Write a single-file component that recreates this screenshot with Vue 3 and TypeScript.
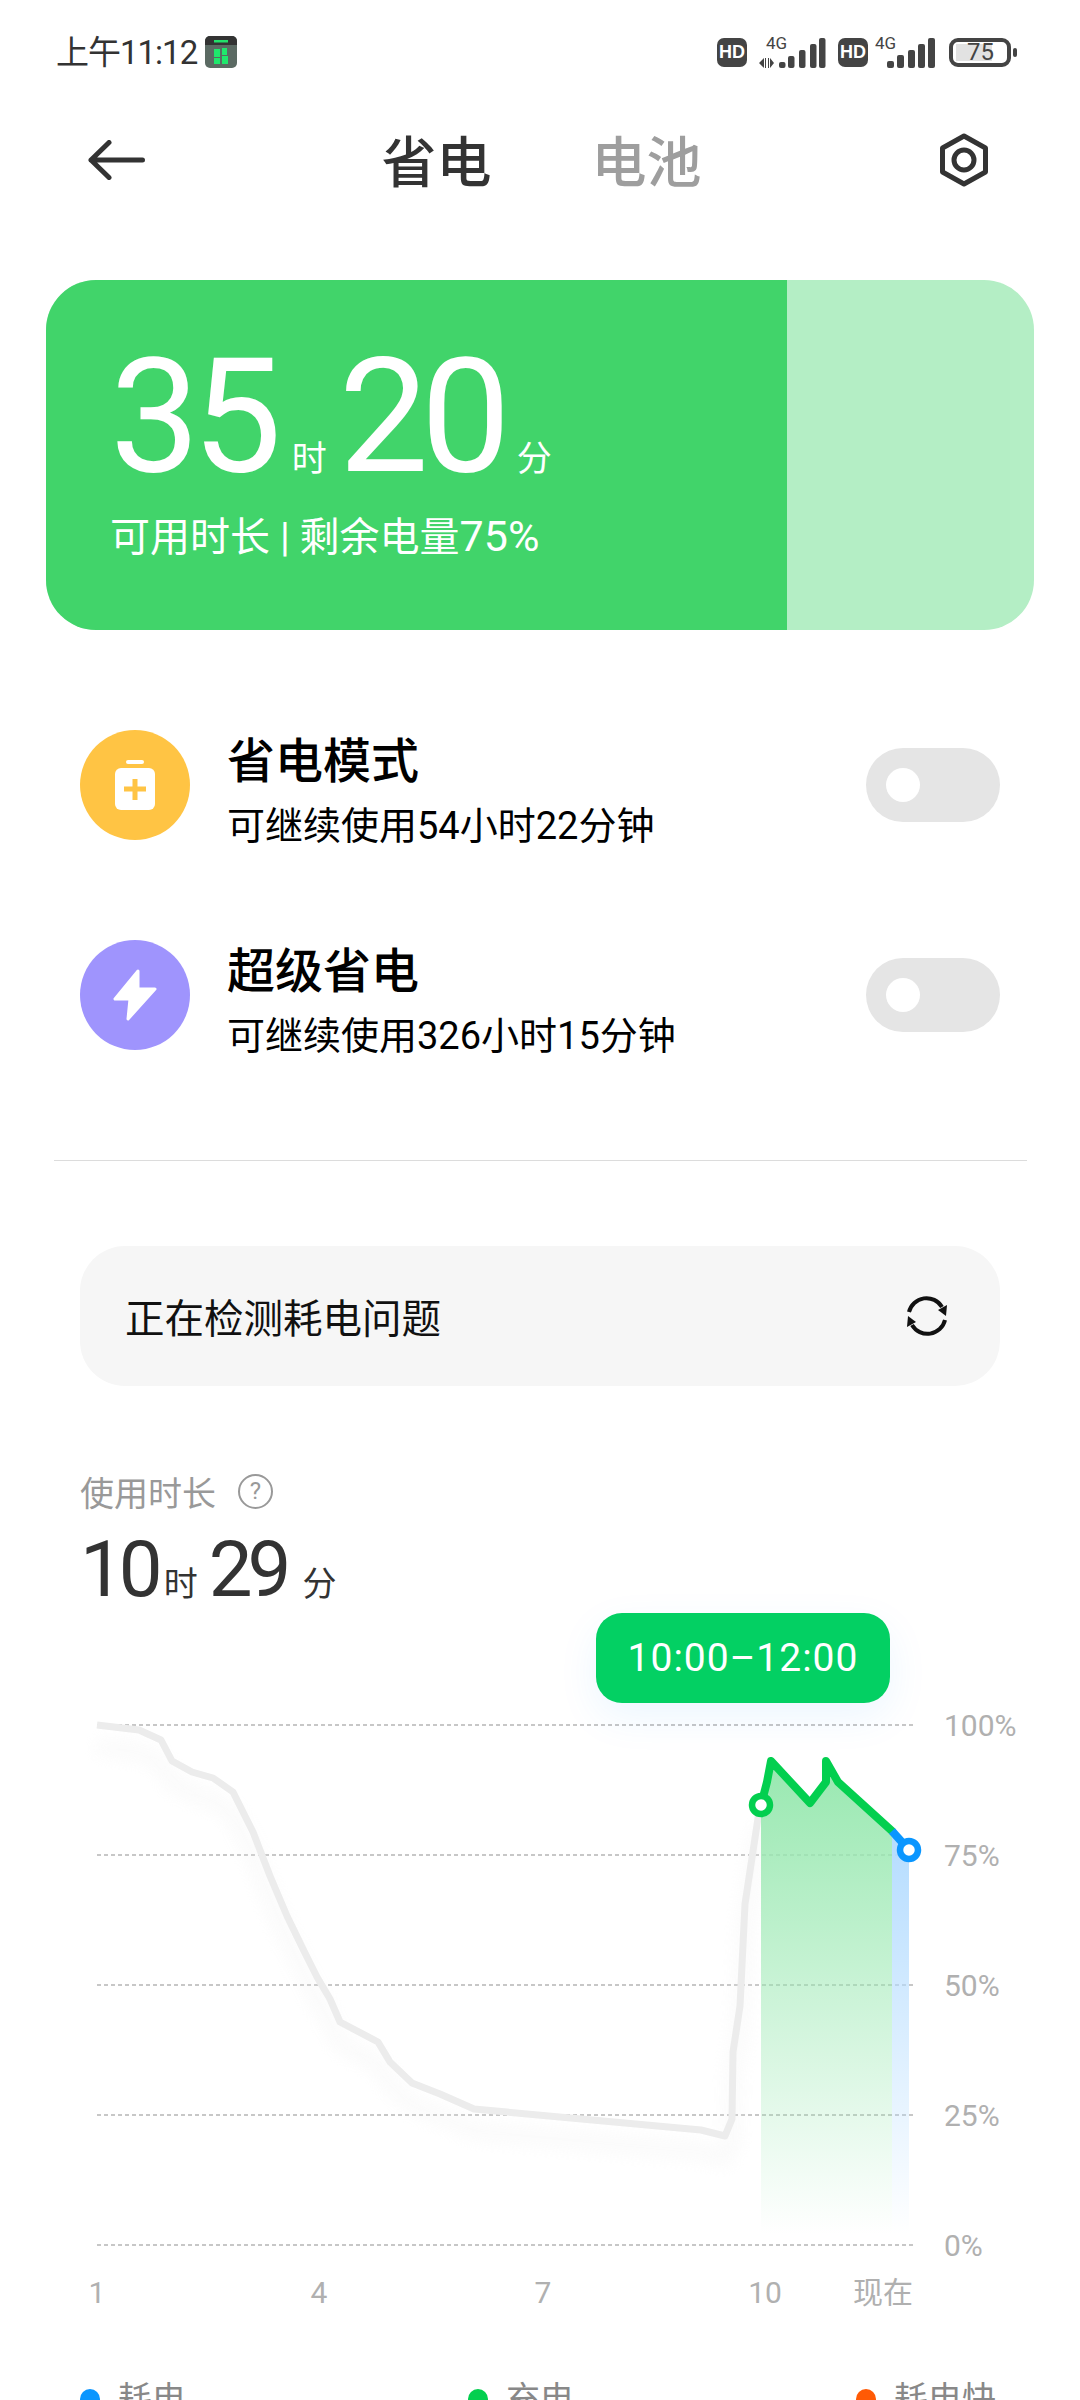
<template>
  <div class="page">
    <div class="status-bar">
      <div class="status-left">
        <span class="clock">上午11:12</span>
        <svg class="app-icon" width="32" height="32" viewBox="0 0 32 32">
          <rect width="32" height="32" rx="5" fill="#5b6a63" />
          <path d="M0 9V5a5 5 0 0 1 5-5h22a5 5 0 0 1 5 5v4z" fill="#333" />
          <rect x="9" y="4" width="14" height="2.5" fill="#22e06a" />
          <rect x="9" y="13" width="6" height="8" fill="#1fe86c" />
          <rect x="9" y="22" width="6" height="6" fill="#1fe86c" />
          <rect x="17" y="12" width="5" height="7" fill="#1fe86c" />
          <rect x="17" y="20" width="6" height="8" fill="#1fe86c" />
        </svg>
      </div>
      <div class="status-right">
        <span class="hd">HD</span>
        <svg class="signal first" width="67" height="36" viewBox="0 -6 67 36">
          <text x="7" y="11" class="net">4G</text>
          <path d="M5 20v10l-5-5zM7 20v10h-1v-10zM10 20v10h-1v-10zM11 20l4 5-4 5z" fill="#444" />
          <rect v-for="b in firstBars" :key="b.x" :x="b.x" :y="30 - b.h" width="6.500" :height="b.h" rx="2" fill="#444" />
        </svg>
        <span class="hd second">HD</span>
        <svg class="signal" width="60" height="36" viewBox="0 -6 60 36">
          <text x="0" y="11" class="net">4G</text>
          <rect v-for="b in secondBars" :key="b.x" :x="b.x" :y="30 - b.h" width="7" :height="b.h" rx="2" fill="#444" />
        </svg>
        <div class="battery">
          <div class="battery-body">
            <div class="battery-fill"></div>
            <span class="battery-num">75</span>
          </div>
          <div class="battery-nub"></div>
        </div>
      </div>
    </div>

    <div class="nav">
      <svg width="57" height="40" viewBox="0 0 57 40" fill="none" stroke="#333" stroke-width="5" stroke-linecap="round" stroke-linejoin="round">
        <path d="M21 2.5 3 20l18 17.5M3 20h51.5" />
      </svg>
      <div class="tabs">
        <span class="tab active">省电</span>
        <span class="tab">电池</span>
      </div>
      <svg width="52" height="54" viewBox="0 0 52 54" fill="none" stroke="#333" stroke-width="5" stroke-linejoin="round">
        <path d="M26 3 47.500 15v24L26 51 4.500 39V15z" />
        <circle cx="26" cy="27" r="10" />
      </svg>
    </div>

    <div class="battery-card">
      <div class="battery-level">
        <div class="hero">
          <span class="hero-num">35</span><span class="hero-unit">时</span>
          <span class="hero-num">20</span><span class="hero-unit">分</span>
        </div>
        <div class="hero-sub">可用时长 | 剩余电量<span class="hero-pct">75%</span></div>
      </div>
    </div>

    <div class="modes">
      <div v-for="m in modes" :key="m.title" class="mode">
        <div class="mode-icon" :class="m.kind">
          <svg v-if="m.kind === 'saver'" width="40" height="50" viewBox="0 0 40 50">
            <rect x="11" y="0" width="18" height="4" rx="2" fill="#fff" />
            <rect x="0" y="8" width="40" height="42" rx="6" fill="#fff" />
            <path d="M9 29h22M20 19v21" stroke="#ffc444" stroke-width="5" fill="none" />
          </svg>
          <svg v-else width="44" height="52" viewBox="0 0 44 52">
            <path d="M25 2 2 30h15l-2 20 27-30H25z" fill="#fff" stroke="#fff" stroke-width="3" stroke-linejoin="round" />
          </svg>
        </div>
        <div class="mode-text">
          <div class="mode-title">{{ m.title }}</div>
          <div class="mode-sub">{{ m.sub }}</div>
        </div>
        <div class="toggle"><div class="knob"></div></div>
      </div>
    </div>

    <div class="divider"></div>

    <div class="detect">
      <span>正在检测耗电问题</span>
      <svg width="42" height="40" viewBox="0 0 42 40" fill="none">
        <path d="M3 16A18 18 0 0 1 36 11" stroke="#111" stroke-width="4" />
        <path d="M39 24A18 18 0 0 1 6 29" stroke="#111" stroke-width="4" />
        <path d="M41 9 40 20 32 14z" fill="#111" />
        <path d="M1 31 2 20 10 26z" fill="#111" />
      </svg>
    </div>

    <div class="usage">
      <div class="usage-label">
        <span>使用时长</span>
        <span class="help">?</span>
      </div>
      <div class="usage-time">
        <span class="usage-num">10</span><span class="usage-unit">时</span>
        <span class="usage-num">29</span><span class="usage-unit">分</span>
      </div>
    </div>

    <div class="chart">
      <svg class="chart-svg" width="1080" height="770" viewBox="0 1600 1080 770">
        <defs>
          <linearGradient id="greenFill" x1="0" y1="0" x2="0" y2="1">
            <stop offset="0" stop-color="#98e8b0" />
            <stop offset="1" stop-color="#98e8b0" stop-opacity="0" />
          </linearGradient>
          <linearGradient id="blueFill" x1="0" y1="0" x2="0" y2="1">
            <stop offset="0" stop-color="#b4dcff" />
            <stop offset="1" stop-color="#b4dcff" stop-opacity="0" />
          </linearGradient>
          <filter id="soft" x="-20%" y="-20%" width="140%" height="140%">
            <feGaussianBlur stdDeviation="9" />
          </filter>
        </defs>

        <g v-for="g in gridLines" :key="g.label">
          <line x1="97" x2="913" :y1="g.y" :y2="g.y" class="grid" />
          <text x="944" :y="g.y + 11" class="axis">{{ g.label }}</text>
        </g>
        <text v-for="t in xLabels" :key="t.label" :x="t.x" y="2304" text-anchor="middle" class="axis">{{ t.label }}</text>

        <polyline :points="usedLine" class="used-shadow" filter="url(#soft)" transform="translate(0 22)" />
        <polyline :points="usedLine" class="used" />

        <polygon :points="greenArea" fill="url(#greenFill)" />
        <polygon points="892,1832 909,1851 909,2235 892,2235" fill="url(#blueFill)" />
        <polyline :points="greenPoints" class="line-green" />
        <line x1="892" y1="1832" x2="909" y2="1851" class="line-blue" />
        <circle cx="761" cy="1806" r="9" fill="#fff" stroke="#03cf4f" stroke-width="6.500" />
        <circle cx="909" cy="1851" r="9" fill="#fff" stroke="#0a96ff" stroke-width="6.500" />
      </svg>
      <div class="tip">10:00–12:00</div>
    </div>

    <div class="legend">
      <div v-for="l in legend" :key="l.label" class="legend-item">
        <span class="dot" :style="{ background: l.color }"></span>
        <span>{{ l.label }}</span>
      </div>
    </div>
  </div>
</template>

<script setup lang="ts">
const firstBars = [
  { x: 20, h: 6 },
  { x: 29, h: 12 },
  { x: 40, h: 18 },
  { x: 51, h: 24 },
  { x: 60, h: 30 },
]
const secondBars = [
  { x: 12, h: 7 },
  { x: 22, h: 13 },
  { x: 33, h: 18 },
  { x: 43, h: 24 },
  { x: 53, h: 30 },
]

const modes = [
  { kind: 'saver', title: '省电模式', sub: '可继续使用54小时22分钟' },
  { kind: 'super', title: '超级省电', sub: '可继续使用326小时15分钟' },
]

const gridLines = [
  { y: 1726, label: '100%' },
  { y: 1856, label: '75%' },
  { y: 1986, label: '50%' },
  { y: 2116, label: '25%' },
  { y: 2246, label: '0%' },
]

const xLabels = [
  { x: 97, label: '1' },
  { x: 319, label: '4' },
  { x: 543, label: '7' },
  { x: 765, label: '10' },
  { x: 883, label: '现在' },
]

const usedLine =
  '97,1726 139,1731 161,1741 172,1762 192,1773 213,1779 233,1793 253,1833 270,1877 287,1917 303,1950 317,1978 330,2000 340,2023 378,2043 390,2063 412,2084 440,2095 474,2110 701,2131 725,2137 732,2120 733,2053 740,2007 745,1905 760,1806'

const greenPoints = '761,1806 767,1783 771,1762 810,1804 826,1783 826,1762 838,1783 892,1832'
const greenArea = `${greenPoints} 892,2235 761,2235`

const legend = [
  { label: '耗电', color: '#0a96ff' },
  { label: '充电', color: '#03cf4f' },
  { label: '耗电快', color: '#ff5a05' },
]
</script>

<style scoped>
.page {
  position: relative;
  width: 1080px;
  height: 2400px;
  overflow: hidden;
  background: #fff;
  font-family: Roboto, "Noto Sans CJK SC", sans-serif;
  color: #333;
}
.status-bar {
  display: flex;
  justify-content: space-between;
  align-items: center;
  height: 32px;
  padding: 36px 63px 0 56px;
}
.status-left {
  display: flex;
  align-items: center;
  gap: 8px;
}
.clock {
  font-size: 33px;
  line-height: 32px;
  letter-spacing: -1px;
  color: #333;
  margin-top: 2px;
}
.status-right {
  display: flex;
  align-items: flex-end;
  height: 34px;
}
.hd {
  width: 30px;
  height: 29px;
  margin-bottom: 2px;
  border-radius: 7px;
  background: #444;
  color: #fff;
  font-size: 18px;
  font-weight: 700;
  line-height: 29px;
  text-align: center;
  font-family: "Liberation Sans", sans-serif;
}
.signal.first {
  margin-left: 12px;
}
.hd.second {
  margin-left: 12px;
}
.signal {
  margin-left: 7px;
  margin-bottom: 1px;
}
.net {
  font-size: 17px;
  fill: #444;
  font-family: Roboto, sans-serif;
}
.battery {
  display: flex;
  align-items: center;
  margin: 0 0 2px 14px;
}
.battery-body {
  position: relative;
  box-sizing: border-box;
  width: 62px;
  height: 29px;
  border: 4px solid #444;
  border-radius: 9px;
}
.battery-fill {
  width: 36px;
  height: 17px;
  margin: 2px 0 0 3px;
  background: #e2e2e2;
}
.battery-num {
  position: absolute;
  left: 14px;
  top: -2px;
  font-size: 24px;
  line-height: 25px;
  color: #444;
}
.battery-nub {
  width: 4px;
  height: 9px;
  margin-left: 2px;
  border-radius: 2px;
  background: #444;
}
.nav {
  display: flex;
  align-items: center;
  justify-content: space-between;
  height: 54px;
  margin-top: 65px;
  padding: 0 90px 0 88px;
}
.tabs {
  display: flex;
  gap: 100px;
  padding-top: 6px;
}
.tab {
  font-size: 55px;
  line-height: 54px;
  font-weight: 500;
  color: #9e9e9e;
}
.tab.active {
  color: #333;
}
.battery-card {
  width: 988px;
  height: 350px;
  margin: 93px 0 0 46px;
  border-radius: 50px;
  overflow: hidden;
  background: #b4eec5;
}
.battery-level {
  box-sizing: border-box;
  width: 741px;
  height: 350px;
  padding: 57px 0 0 64px;
  background: #41d46a;
  color: #fff;
}
.hero {
  display: flex;
  align-items: baseline;
  height: 160px;
}
.hero-num {
  font-size: 160px;
  line-height: 160px;
  font-weight: 400;
  letter-spacing: -8px;
}
.hero-unit {
  font-size: 35px;
  margin: 0 12px 0 18px;
}
.hero-unit:last-child {
  margin-left: 14px;
}
.hero-sub {
  margin-top: 19px;
  font-size: 40px;
  line-height: 40px;
}
.hero-pct {
  font-size: 43px;
}
.modes {
  display: flex;
  flex-direction: column;
  gap: 100px;
  margin-top: 100px;
  padding: 0 80px;
}
.mode {
  display: flex;
  align-items: center;
  height: 110px;
}
.mode-icon {
  display: flex;
  align-items: center;
  justify-content: center;
  width: 110px;
  height: 110px;
  border-radius: 50%;
}
.mode-icon.saver {
  background: #ffc444;
}
.mode-icon.super {
  background: #9f94fd;
}
.mode-text {
  flex: 1;
  margin: 13px 0 0 37px;
  color: #000;
}
.mode-title {
  font-size: 48px;
  line-height: 50px;
  font-weight: 500;
}
.mode-sub {
  margin-top: 18px;
  font-size: 38px;
  line-height: 42px;
}
.toggle {
  box-sizing: border-box;
  width: 134px;
  height: 74px;
  padding: 20px;
  border-radius: 37px;
  background: #e5e5e5;
}
.knob {
  width: 34px;
  height: 34px;
  border-radius: 50%;
  background: #fff;
}
.divider {
  height: 1px;
  margin: 110px 53px 0 54px;
  background: #dcdcdc;
}
.detect {
  display: flex;
  align-items: center;
  justify-content: space-between;
  height: 140px;
  margin: 85px 80px 0;
  padding: 0 52px 0 45px;
  border-radius: 45px;
  background: #f6f6f6;
  font-size: 39.500px;
  color: #111;
}
.detect span {
  margin-top: -2px;
}
.usage {
  padding: 0 80px;
  margin-top: 87px;
}
.usage-label {
  display: flex;
  align-items: center;
  gap: 22px;
  height: 36px;
  font-size: 34px;
  color: #999;
}
.help {
  width: 31px;
  height: 31px;
  border: 2.500px solid #999;
  border-radius: 50%;
  font-size: 24px;
  line-height: 31px;
  text-align: center;
}
.usage-time {
  display: flex;
  align-items: baseline;
  height: 64px;
  margin-top: 26px;
}
.usage-num {
  font-size: 78px;
  line-height: 70px;
  letter-spacing: -5px;
}
.usage-unit {
  font-size: 34px;
  margin: 0 11px 0 6px;
}
.usage-unit:last-child {
  margin-left: 16px;
}
.chart {
  position: relative;
  height: 770px;
}
.chart-svg {
  display: block;
}
.grid {
  stroke: #b5b5b5;
  stroke-width: 1.5;
  stroke-dasharray: 4 3;
}
.axis {
  font-size: 30px;
  fill: #b0b0b0;
  font-family: Roboto, "Noto Sans CJK SC", sans-serif;
}
.used {
  fill: none;
  stroke: #ececec;
  stroke-width: 7;
  stroke-linejoin: round;
}
.used-shadow {
  fill: none;
  stroke: #eeeeee;
  stroke-width: 10;
  opacity: 0.45;
}
.line-green {
  fill: none;
  stroke: #03cf4f;
  stroke-width: 8;
  stroke-linejoin: round;
  stroke-linecap: round;
}
.line-blue {
  stroke: #0a96ff;
  stroke-width: 8;
}
.tip {
  position: absolute;
  left: 596px;
  top: 14px;
  width: 294px;
  height: 90px;
  border-radius: 26px;
  background: #03d063;
  box-shadow: 0 14px 40px rgba(0, 140, 255, 0.08);
  color: #fff;
  font-size: 39px;
  line-height: 91px;
  text-align: center;
  letter-spacing: 1px;
}
.legend {
  display: grid;
  grid-template-columns: 388px 388px 1fr;
  padding-left: 80px;
  margin-top: 10px;
}
.legend-item {
  display: flex;
  align-items: center;
  gap: 18px;
  height: 40px;
  font-size: 34px;
  line-height: 40px;
  color: #888;
}
.dot {
  width: 20px;
  height: 20px;
  border-radius: 50%;
}
</style>
